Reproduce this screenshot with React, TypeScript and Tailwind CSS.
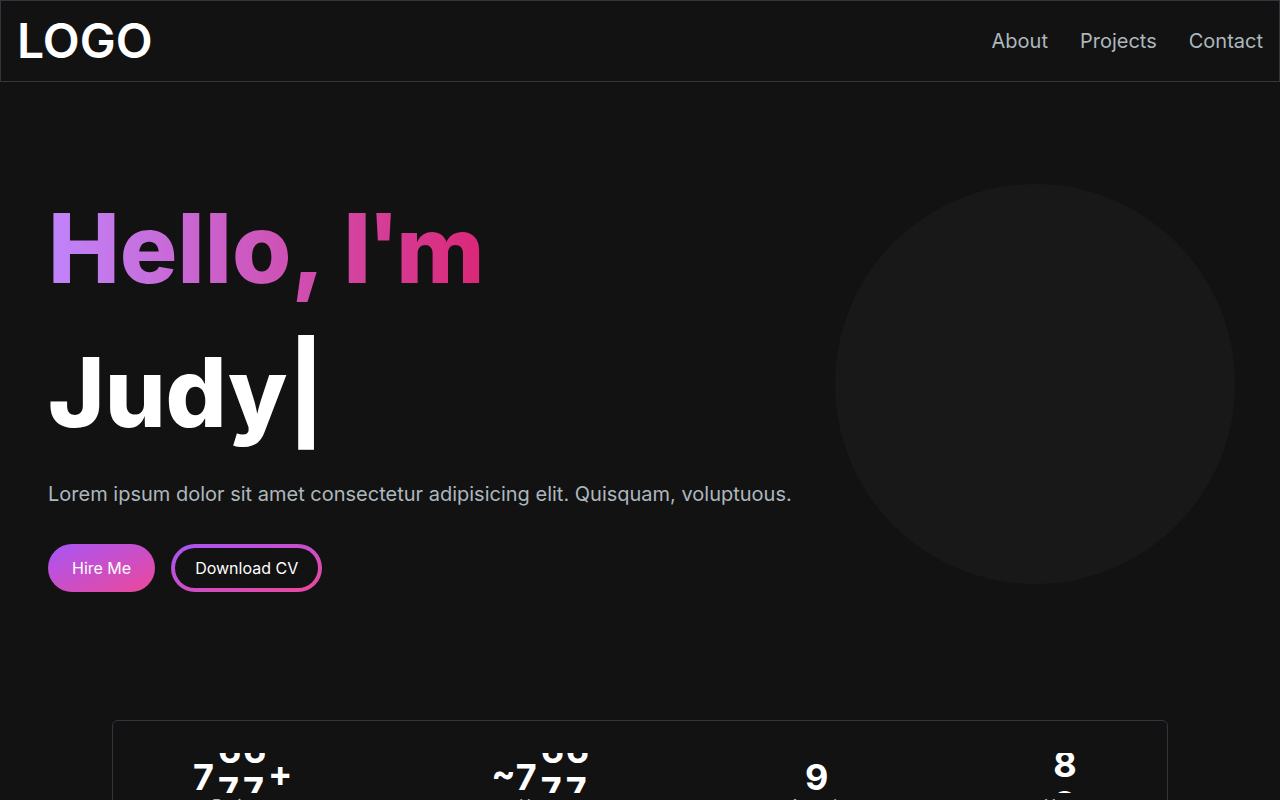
const font = "font-['Inter',sans-serif]";

type Roll = "settled" | "late" | "early";
type Stat = { prefix?: string; digits: { value: number; roll: Roll }[]; suffix?: string; label: string };

const stats: Stat[] = [
  {
    digits: [
      { value: 7, roll: "settled" },
      { value: 6, roll: "late" },
      { value: 6, roll: "late" },
    ],
    suffix: "+",
    label: "Projects",
  },
  {
    prefix: "~",
    digits: [
      { value: 7, roll: "settled" },
      { value: 6, roll: "late" },
      { value: 6, roll: "late" },
    ],
    label: "Users",
  },
  { digits: [{ value: 9, roll: "settled" }], label: "Awards" },
  { digits: [{ value: 8, roll: "early" }], label: "Years" },
];

const rollClass: Record<Roll, string> = {
  settled: "mt-1",
  early: "-mt-[9px]",
  late: "-mt-[23px]",
};

/* One digit column of the rolling counter; the next digit follows below it. */
function Reel({ value, roll }: { value: number; roll: Roll }) {
  return (
    <span className={`flex w-[25px] flex-col ${rollClass[roll]}`}>
      <span>{value}</span>
      {roll !== "settled" && <span>{value + 1}</span>}
    </span>
  );
}

export default function App() {
  return (
    <div className={`h-screen overflow-hidden bg-[#121212] text-white ${font}`}>
      <header className="flex items-center justify-between border border-[#33353f] p-4">
        <a href="#home" className="text-5xl font-semibold">LOGO</a>
        <nav className="flex gap-8 text-xl text-[#adb7be]">
          <a href="#about">About</a>
          <a href="#projects">Projects</a>
          <a href="#contact">Contact</a>
        </nav>
      </header>
      <main>
        <section className="grid grid-cols-12 items-center px-12 pt-[94px]">
          <div className="col-span-8">
            <h1 className="mb-4 text-8xl leading-normal font-extrabold">
              <span className="bg-linear-to-r/srgb from-[#c084fc] to-[#db2777] bg-clip-text text-transparent">
                Hello,<span className="font-['Inter_Display','Inter',sans-serif]"> I'm</span>
              </span>
              <br />
              <span>Judy|</span>
            </h1>
            <p className="mb-9 text-xl text-[#adb7be]">
              Lorem ipsum dolor sit amet consectetur adipisicing elit. Quisquam, voluptuous.
            </p>
            <div className="flex gap-4">
              <button className="rounded-full bg-linear-to-br/srgb from-[#a855f7] to-[#ec4899] px-6 py-3">Hire Me</button>
              <button className="rounded-full bg-linear-to-br/srgb from-[#a855f7] to-[#ec4899] p-1">
                <span className="block rounded-full bg-[#121212] px-5 py-2">Download CV</span>
              </button>
            </div>
          </div>
          <div className="col-span-4 flex justify-center">
            <div className="size-[400px] shrink-0 rounded-full bg-[#181818]" />
          </div>
        </section>
        <section className="px-28 pt-32">
          <div className="flex justify-between rounded-md border border-[#33353f] px-16 py-8">
            {stats.map((s) => (
              <div key={s.label} className="mx-4 flex flex-col items-center">
                <h2 className="flex h-10 overflow-hidden text-4xl font-bold">
                  {s.prefix}
                  {s.digits.map((d, i) => <Reel key={i} {...d} />)}
                  {s.suffix}
                </h2>
                <p className="text-base text-[#adb7be]">{s.label}</p>
              </div>
            ))}
          </div>
        </section>
      </main>
    </div>
  );
}
